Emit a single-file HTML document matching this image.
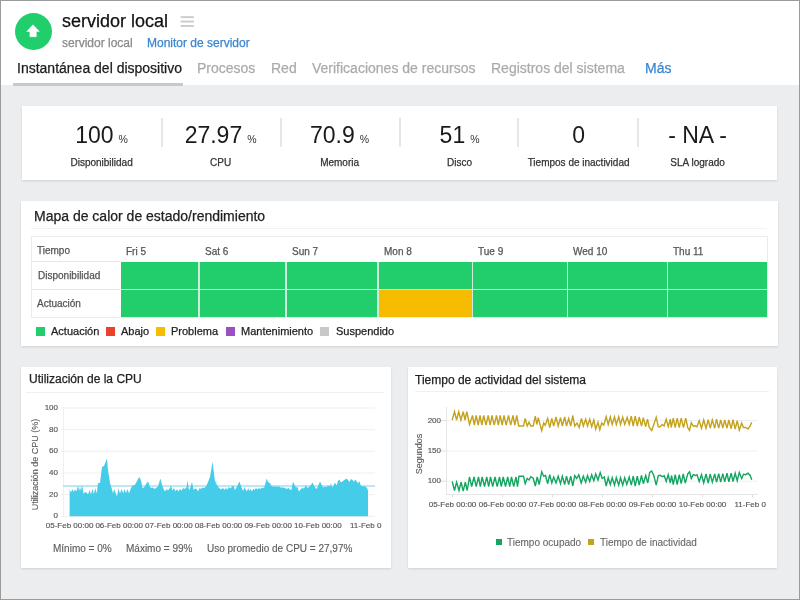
<!DOCTYPE html>
<html><head><meta charset="utf-8">
<style>
*{box-sizing:border-box;margin:0;padding:0}
html,body{width:800px;height:600px;overflow:hidden;background:#fff}
body{font-family:"Liberation Sans",sans-serif;position:relative;color:#222}
.a{position:absolute;white-space:nowrap;will-change:transform;-webkit-text-stroke:0.25px currentColor}
#frame{position:absolute;left:0;top:0;width:800px;height:600px;border:1px solid #9b9b9b;pointer-events:none;z-index:10}
#gray{position:absolute;left:0;top:85px;width:800px;height:515px;background:#ecedef}
.card{position:absolute;background:#fff;box-shadow:0 1px 2px rgba(0,0,0,0.12)}
.sn{font-size:23px;line-height:23px;text-align:center;color:#1a1a1a;-webkit-text-stroke:0}
.pc{font-size:10.5px;margin-left:5px;color:#333}
.sl{font-size:10px;line-height:10px;text-align:center;color:#333}
.hl{font-size:10px;line-height:10px;color:#555}
.hd{font-size:10px;line-height:10px;color:#555}
.lg{font-size:11px;line-height:11px;color:#222}
.ct{font-size:12px;line-height:12px;color:#222}
.ax{font-size:8px;fill:#555;stroke:#555;stroke-width:0.15px;font-family:"Liberation Sans",sans-serif}
.yt{font-size:9px;fill:#5a5a5a;stroke:#5a5a5a;stroke-width:0.12px;font-family:"Liberation Sans",sans-serif}
.st{font-size:10px;line-height:10px;color:#5e5e5e;-webkit-text-stroke:0.15px #5e5e5e}
.st2{font-size:10px;line-height:10px;color:#666;-webkit-text-stroke:0.1px #666}
</style></head><body>
<div id="gray"></div>

<!-- header -->
<div class="a" style="left:15px;top:13px;width:37px;height:37px;border-radius:50%;background:#21ce6c"></div>
<svg class="a" style="left:0;top:0" width="60" height="50"><path d="M33 24.8 L39.3 31.4 L36.3 31.4 L36.3 36.7 L29.9 36.7 L29.9 31.4 L26.7 31.4 Z" fill="#fff" stroke="#fff" stroke-width="0.5" stroke-linejoin="round"/></svg>
<div class="a" style="left:62px;top:11px;font-size:18px;color:#111">servidor local</div>
<svg class="a" style="left:0;top:0" width="200" height="40"><rect x="180.6" y="16.2" width="13.2" height="1.9" fill="#cbcbcb"/><rect x="180.6" y="20.6" width="13.2" height="1.9" fill="#cbcbcb"/><rect x="180.6" y="25" width="13.2" height="1.9" fill="#cbcbcb"/></svg>
<div class="a" style="left:62px;top:35.5px;font-size:12px;color:#8a8a8a">servidor local</div>
<div class="a" style="left:147px;top:35.5px;font-size:12px;color:#3b86d0">Monitor de servidor</div>

<!-- tabs -->
<div class="a" style="left:17px;top:60px;font-size:14px;color:#1c1c1c">Instantánea del dispositivo</div>
<div class="a" style="left:197px;top:60px;font-size:14px;color:#ababab">Procesos</div>
<div class="a" style="left:271px;top:60px;font-size:14px;color:#ababab">Red</div>
<div class="a" style="left:312px;top:60px;font-size:14px;color:#ababab">Verificaciones de recursos</div>
<div class="a" style="left:491px;top:60px;font-size:14px;color:#ababab">Registros del sistema</div>
<div class="a" style="left:645px;top:60px;font-size:14px;color:#3b86d0">Más</div>
<div class="a" style="left:13px;top:83px;width:170px;height:3px;background:#c9c9c9"></div>

<!-- stats card -->
<div class="card" style="left:22px;top:106px;width:755px;height:74px"></div>

<div class="a sn" style="left:42.00px;top:123.5px;width:119.17px">100<span class="pc">%</span></div>
<div class="a sl" style="left:42.00px;top:157.5px;width:119.17px">Disponibilidad</div>
<div class="a" style="left:160.5px;top:117.7px;width:1.5px;height:29px;background:#e6e6e6"></div>
<div class="a sn" style="left:161.17px;top:123.5px;width:119.17px">27.97<span class="pc">%</span></div>
<div class="a sl" style="left:161.17px;top:157.5px;width:119.17px">CPU</div>
<div class="a" style="left:280.0px;top:117.7px;width:1.5px;height:29px;background:#e6e6e6"></div>
<div class="a sn" style="left:280.33px;top:123.5px;width:119.17px">70.9<span class="pc">%</span></div>
<div class="a sl" style="left:280.33px;top:157.5px;width:119.17px">Memoria</div>
<div class="a" style="left:399.1px;top:117.7px;width:1.5px;height:29px;background:#e6e6e6"></div>
<div class="a sn" style="left:399.50px;top:123.5px;width:119.17px">51<span class="pc">%</span></div>
<div class="a sl" style="left:399.50px;top:157.5px;width:119.17px">Disco</div>
<div class="a" style="left:517.3px;top:117.7px;width:1.5px;height:29px;background:#e6e6e6"></div>
<div class="a sn" style="left:518.67px;top:123.5px;width:119.17px">0</div>
<div class="a sl" style="left:518.67px;top:157.5px;width:119.17px">Tiempos de inactividad</div>
<div class="a" style="left:637.1px;top:117.7px;width:1.5px;height:29px;background:#e6e6e6"></div>
<div class="a sn" style="left:637.83px;top:123.5px;width:119.17px">- NA -</div>
<div class="a sl" style="left:637.83px;top:157.5px;width:119.17px">SLA logrado</div>

<!-- heatmap card -->
<div class="card" style="left:21px;top:200.5px;width:756.5px;height:145.5px"></div>

<div class="a" style="left:34.2px;top:208.8px;font-size:14px;line-height:14px;color:#222">Mapa de calor de estado/rendimiento</div>
<div class="a" style="left:31px;top:228px;width:736px;height:1px;background:#f2f2f2"></div>
<div class="a" style="left:31px;top:236px;width:737px;height:82px;border:1px solid #ebebeb"></div>
<div class="a" style="left:32px;top:261px;width:89px;height:1px;background:#e8e8e8"></div>
<div class="a" style="left:32px;top:289px;width:89px;height:1px;background:#e8e8e8"></div>
<div class="a hl" style="left:37px;top:246px">Tiempo</div>
<div class="a hl" style="left:37.5px;top:270.5px">Disponibilidad</div>
<div class="a hl" style="left:37px;top:298.5px">Actuación</div>
<div class="a" style="left:121px;top:262px;width:646px;height:55px;background:#d2eadb"></div>
<div class="a hd" style="left:125.5px;top:246.5px">Fri 5</div>
<div class="a" style="left:121px;top:262px;width:77px;height:27px;background:#22cd6b"></div>
<div class="a" style="left:121px;top:290px;width:77px;height:27px;background:#22cd6b"></div>
<div class="a hd" style="left:204.5px;top:246.5px">Sat 6</div>
<div class="a" style="left:200px;top:262px;width:85px;height:27px;background:#22cd6b"></div>
<div class="a" style="left:200px;top:290px;width:85px;height:27px;background:#22cd6b"></div>
<div class="a hd" style="left:291.5px;top:246.5px">Sun 7</div>
<div class="a" style="left:287px;top:262px;width:90px;height:27px;background:#22cd6b"></div>
<div class="a" style="left:287px;top:290px;width:90px;height:27px;background:#22cd6b"></div>
<div class="a hd" style="left:383.5px;top:246.5px">Mon 8</div>
<div class="a" style="left:379px;top:262px;width:93px;height:27px;background:#22cd6b"></div>
<div class="a" style="left:379px;top:290px;width:93px;height:27px;background:#f6bd00"></div>
<div class="a hd" style="left:477.5px;top:246.5px">Tue 9</div>
<div class="a" style="left:473px;top:262px;width:94px;height:27px;background:#22cd6b"></div>
<div class="a" style="left:473px;top:290px;width:94px;height:27px;background:#22cd6b"></div>
<div class="a hd" style="left:572.5px;top:246.5px">Wed 10</div>
<div class="a" style="left:568px;top:262px;width:99px;height:27px;background:#22cd6b"></div>
<div class="a" style="left:568px;top:290px;width:99px;height:27px;background:#22cd6b"></div>
<div class="a hd" style="left:672.5px;top:246.5px">Thu 11</div>
<div class="a" style="left:668px;top:262px;width:99px;height:27px;background:#22cd6b"></div>
<div class="a" style="left:668px;top:290px;width:99px;height:27px;background:#22cd6b"></div>
<div class="a" style="left:36px;top:327px;width:9px;height:9px;background:#22cd6b"></div>
<div class="a lg" style="left:50.5px;top:326px">Actuación</div>
<div class="a" style="left:106px;top:327px;width:9px;height:9px;background:#e8412c"></div>
<div class="a lg" style="left:120.5px;top:326px">Abajo</div>
<div class="a" style="left:156px;top:327px;width:9px;height:9px;background:#f6bd00"></div>
<div class="a lg" style="left:171px;top:326px">Problema</div>
<div class="a" style="left:225.5px;top:327px;width:9px;height:9px;background:#9b4fc0"></div>
<div class="a lg" style="left:240.5px;top:326px">Mantenimiento</div>
<div class="a" style="left:319.5px;top:327px;width:9px;height:9px;background:#c8c8c8"></div>
<div class="a lg" style="left:336px;top:326px">Suspendido</div>

<!-- cpu card -->
<div class="card" style="left:21px;top:367px;width:369.5px;height:201px"></div>

<!-- uptime card -->
<div class="card" style="left:408px;top:367px;width:369px;height:201px"></div>

<!-- charts -->
<div class="a ct" style="left:29px;top:372.8px">Utilización de la CPU</div>
<div class="a" style="left:26px;top:392px;width:358px;height:1px;background:#f0f0f0"></div>
<svg class="a" style="left:0;top:0" width="800" height="600" viewBox="0 0 800 600">
<line x1="61" y1="516.3" x2="375" y2="516.3" stroke="#efefef" stroke-width="1"/>
<text x="58" y="518.4" text-anchor="end" class="ax">0</text>
<line x1="61" y1="494.6" x2="375" y2="494.6" stroke="#efefef" stroke-width="1"/>
<text x="58" y="496.7" text-anchor="end" class="ax">20</text>
<line x1="61" y1="473.0" x2="375" y2="473.0" stroke="#efefef" stroke-width="1"/>
<text x="58" y="475.1" text-anchor="end" class="ax">40</text>
<line x1="61" y1="451.3" x2="375" y2="451.3" stroke="#efefef" stroke-width="1"/>
<text x="58" y="453.4" text-anchor="end" class="ax">60</text>
<line x1="61" y1="429.7" x2="375" y2="429.7" stroke="#efefef" stroke-width="1"/>
<text x="58" y="431.8" text-anchor="end" class="ax">80</text>
<line x1="61" y1="408.0" x2="375" y2="408.0" stroke="#efefef" stroke-width="1"/>
<text x="58" y="410.1" text-anchor="end" class="ax">100</text>
<line x1="63.5" y1="407" x2="63.5" y2="517" stroke="#efefef" stroke-width="1"/>
<line x1="63" y1="486" x2="375" y2="486" stroke="#a6dff2" stroke-width="1.5"/>
<path d="M69.6,516.3 L69.6,489.0 L71.0,492.4 L72.4,489.0 L73.6,492.0 L75.0,489.6 L76.4,491.6 L78.0,485.6 L79.2,491.0 L80.0,486.4 L81.0,491.0 L82.0,484.4 L83.6,494.0 L85.0,492.0 L86.4,492.4 L88.0,494.4 L89.6,490.0 L91.0,494.4 L92.4,489.0 L94.0,494.0 L95.2,488.0 L96.8,493.6 L98.0,483.0 L100.0,483.0 L102.0,467.0 L104.0,466.0 L105.6,462.0 L107.0,458.4 L108.0,470.0 L110.0,483.0 L111.6,488.0 L113.0,493.6 L114.0,489.0 L115.6,493.0 L117.0,496.4 L118.4,488.4 L120.0,493.6 L121.6,489.0 L123.2,493.6 L124.4,489.0 L126.0,493.0 L127.6,489.0 L129.0,493.6 L131.0,488.0 L133.0,485.0 L134.4,485.6 L136.0,483.0 L138.0,479.0 L139.6,477.0 L141.6,483.0 L142.4,488.0 L144.0,487.6 L145.6,485.0 L147.0,482.4 L148.4,482.0 L149.6,486.0 L151.0,488.0 L153.0,487.6 L154.4,489.0 L156.0,488.0 L158.0,486.4 L160.4,478.4 L162.0,485.0 L163.6,489.0 L165.0,491.6 L166.4,489.0 L168.0,490.4 L169.6,488.4 L171.0,485.6 L172.4,490.4 L174.0,488.0 L175.6,491.6 L177.0,489.0 L178.4,491.6 L180.0,489.0 L181.6,490.4 L183.2,488.0 L185.0,489.0 L186.4,487.6 L187.6,480.4 L189.0,490.4 L190.4,487.6 L192.0,482.0 L193.6,490.0 L195.0,488.4 L196.6,489.0 L198.0,491.6 L199.6,488.0 L201.0,489.0 L202.4,487.6 L204.0,488.0 L206.0,486.4 L208.0,482.0 L210.0,477.0 L211.2,470.0 L212.6,461.6 L214.0,474.0 L215.0,481.0 L218.0,484.0 L215.0,482.0 L217.0,485.0 L219.0,488.0 L221.0,489.6 L223.0,488.0 L224.6,490.0 L226.0,488.0 L227.4,489.6 L229.0,487.0 L230.6,488.4 L232.0,486.4 L233.4,485.6 L235.0,490.0 L237.0,486.4 L239.4,481.4 L241.4,487.0 L243.0,491.0 L244.6,487.6 L246.0,490.0 L247.0,491.6 L248.2,488.0 L249.4,491.0 L250.6,489.0 L252.0,491.6 L253.4,488.4 L254.6,490.0 L256.0,488.0 L257.4,489.6 L259.0,488.0 L260.6,489.0 L262.0,487.6 L264.0,488.0 L265.0,485.0 L266.6,478.4 L268.0,482.0 L270.0,483.0 L271.4,486.0 L273.0,486.4 L275.0,486.4 L277.0,486.4 L279.0,486.4 L280.6,487.6 L283.0,487.6 L285.0,488.0 L286.6,489.0 L288.6,488.0 L290.0,489.6 L291.4,490.0 L293.0,481.6 L294.6,485.0 L296.0,487.6 L297.4,487.0 L299.0,491.6 L300.6,489.6 L302.0,488.0 L304.0,488.4 L306.0,485.0 L307.4,488.0 L309.0,487.0 L311.0,485.0 L312.4,482.4 L314.0,485.6 L315.4,488.0 L316.6,489.0 L318.0,486.0 L320.0,481.6 L322.0,485.6 L323.4,487.6 L325.0,486.4 L326.6,487.0 L328.0,485.6 L330.0,486.4 L331.0,483.0 L332.0,487.6 L333.4,486.0 L335.0,482.4 L336.6,485.6 L338.0,481.0 L339.4,479.6 L341.0,482.4 L343.0,481.0 L345.0,479.6 L346.6,478.4 L348.0,480.0 L349.4,482.0 L351.0,479.0 L352.6,480.0 L354.0,482.0 L355.0,479.6 L357.0,481.6 L358.0,483.6 L359.4,481.0 L360.6,485.0 L362.0,486.4 L364.0,486.0 L366.0,487.0 L367.4,488.4 L368.0,491.0 L368.0,516.3 Z" fill="#44cce9"/>
<text x="69.6" y="528" text-anchor="middle" class="ax">05-Feb 00:00</text>
<text x="119.2" y="528" text-anchor="middle" class="ax">06-Feb 00:00</text>
<text x="168.9" y="528" text-anchor="middle" class="ax">07-Feb 00:00</text>
<text x="218.5" y="528" text-anchor="middle" class="ax">08-Feb 00:00</text>
<text x="268.2" y="528" text-anchor="middle" class="ax">09-Feb 00:00</text>
<text x="317.9" y="528" text-anchor="middle" class="ax">10-Feb 00:00</text>
<text x="350" y="528" class="ax">11-Feb 0</text>
<text transform="translate(38.2,464.5) rotate(-90)" text-anchor="middle" class="yt">Utilización de CPU (%)</text>
<line x1="447" y1="481.2" x2="757.5" y2="481.2" stroke="#efefef" stroke-width="1"/>
<line x1="441" y1="481.2" x2="446" y2="481.2" stroke="#e0e0e0" stroke-width="1"/>
<text x="441" y="483.3" text-anchor="end" class="ax">100</text>
<line x1="447" y1="451" x2="757.5" y2="451" stroke="#efefef" stroke-width="1"/>
<line x1="441" y1="451" x2="446" y2="451" stroke="#e0e0e0" stroke-width="1"/>
<text x="441" y="453.1" text-anchor="end" class="ax">150</text>
<line x1="447" y1="420.5" x2="757.5" y2="420.5" stroke="#efefef" stroke-width="1"/>
<line x1="441" y1="420.5" x2="446" y2="420.5" stroke="#e0e0e0" stroke-width="1"/>
<text x="441" y="422.6" text-anchor="end" class="ax">200</text>
<line x1="446.5" y1="407" x2="446.5" y2="494.5" stroke="#e6e6e6" stroke-width="1"/>
<line x1="446" y1="494.5" x2="757.5" y2="494.5" stroke="#e6e6e6" stroke-width="1"/>
<line x1="452.5" y1="494.5" x2="452.5" y2="497.5" stroke="#e0e0e0" stroke-width="1"/>
<line x1="502.5" y1="494.5" x2="502.5" y2="497.5" stroke="#e0e0e0" stroke-width="1"/>
<line x1="552.5" y1="494.5" x2="552.5" y2="497.5" stroke="#e0e0e0" stroke-width="1"/>
<line x1="602.5" y1="494.5" x2="602.5" y2="497.5" stroke="#e0e0e0" stroke-width="1"/>
<line x1="652.5" y1="494.5" x2="652.5" y2="497.5" stroke="#e0e0e0" stroke-width="1"/>
<line x1="702.5" y1="494.5" x2="702.5" y2="497.5" stroke="#e0e0e0" stroke-width="1"/>
<line x1="752.5" y1="494.5" x2="752.5" y2="497.5" stroke="#e0e0e0" stroke-width="1"/>
<text x="452.5" y="507" text-anchor="middle" class="ax">05-Feb 00:00</text>
<text x="502.5" y="507" text-anchor="middle" class="ax">06-Feb 00:00</text>
<text x="552.5" y="507" text-anchor="middle" class="ax">07-Feb 00:00</text>
<text x="602.5" y="507" text-anchor="middle" class="ax">08-Feb 00:00</text>
<text x="652.5" y="507" text-anchor="middle" class="ax">09-Feb 00:00</text>
<text x="702.5" y="507" text-anchor="middle" class="ax">10-Feb 00:00</text>
<text x="734.5" y="507" class="ax">11-Feb 0</text>
<text transform="translate(422,454) rotate(-90)" text-anchor="middle" class="yt">Segundos</text>
<path d="M452.2,420.0 L454.5,411.7 L456.6,420.0 L458.7,411.7 L460.9,420.0 L463.2,411.7 L465.0,420.0 L466.8,411.7 L469.5,424.5 L472.5,415.5 L474.3,425.2 L476.2,415.5 L478.2,425.2 L480.0,415.5 L481.8,425.2 L483.7,415.5 L486.0,425.2 L488.2,415.5 L490.2,425.2 L492.0,415.5 L494.2,425.2 L496.5,415.5 L498.3,425.2 L500.2,415.5 L502.2,425.2 L504.0,415.5 L506.2,425.2 L508.5,415.5 L510.7,425.2 L513.0,415.5 L514.8,425.2 L516.7,415.5 L518.7,426.0 L523.5,426.0 L525.2,418.5 L527.2,426.0 L529.0,422.2 L530.8,426.0 L533.2,426.0 L535.3,416.2 L536.8,424.5 L538.3,417.7 L540.2,425.2 L541.7,430.5 L543.7,423.0 L545.2,425.2 L547.7,418.5 L549.7,427.5 L551.8,418.5 L553.7,426.0 L556.0,417.0 L558.2,426.0 L560.5,417.7 L562.3,426.0 L564.7,417.0 L566.5,426.0 L568.7,418.5 L570.7,426.0 L572.8,415.5 L574.7,426.0 L577.0,423.0 L579.2,427.5 L581.5,418.5 L583.3,426.0 L585.7,419.2 L587.5,426.0 L589.7,419.2 L591.7,426.7 L593.8,420.0 L595.7,429.0 L598.0,422.2 L599.8,429.7 L601.7,423.0 L603.7,425.2 L606.2,416.7 L608.2,424.5 L610.3,417.0 L612.2,424.5 L614.5,417.0 L616.3,424.5 L618.7,416.7 L620.5,424.5 L622.7,417.3 L624.7,424.5 L627.2,417.3 L629.2,424.5 L631.3,416.2 L633.2,426.0 L635.2,416.2 L637.3,426.0 L639.2,417.0 L641.5,426.0 L643.3,417.7 L645.7,426.7 L647.5,419.2 L649.3,427.5 L651.7,430.5 L653.8,424.5 L656.2,417.3 L658.3,426.7 L660.2,426.7 L662.2,424.5 L664.0,426.0 L666.2,419.2 L668.2,426.7 L670.3,419.2 L671.2,427.5 L673.3,418.2 L675.2,427.5 L677.2,418.2 L679.3,427.5 L681.2,418.2 L683.5,427.5 L685.7,418.2 L687.7,427.5 L689.5,430.5 L691.3,422.7 L693.2,426.0 L695.2,425.7 L697.0,426.7 L699.2,420.7 L701.5,428.2 L703.7,420.0 L706.0,428.2 L708.2,419.7 L710.2,428.2 L712.3,420.0 L714.7,428.2 L716.5,419.2 L718.7,428.2 L720.7,420.0 L722.8,428.2 L724.7,420.0 L727.0,428.2 L728.8,420.0 L731.2,428.7 L733.0,419.7 L735.2,429.0 L737.2,420.7 L739.3,430.2 L741.7,423.0 L743.5,427.5 L745.7,427.5 L748.0,429.0 L750.2,426.0 L751.7,422.2" fill="none" stroke="#c4a21c" stroke-width="1.4" stroke-linejoin="miter"/>
<path d="M452.2,481.5 L454.5,490.5 L456.6,482.2 L459.0,490.5 L461.1,482.2 L463.2,491.2 L465.3,482.2 L467.2,490.5 L469.5,477.0 L471.7,486.7 L474.0,477.0 L476.2,486.7 L478.5,477.0 L480.3,486.7 L482.2,477.0 L484.5,486.7 L486.7,477.0 L488.7,486.7 L490.5,477.0 L492.7,486.7 L495.0,477.0 L497.2,486.7 L499.5,477.0 L501.3,486.7 L503.2,477.0 L505.5,486.7 L507.7,477.0 L509.7,486.7 L511.5,477.0 L513.7,486.7 L516.0,477.0 L517.5,486.7 L519.0,476.2 L523.5,476.2 L525.2,483.7 L527.2,478.5 L529.0,480.0 L530.8,476.7 L533.2,478.2 L535.3,486.0 L537.2,477.0 L539.2,484.5 L541.7,471.7 L543.7,476.2 L545.5,475.5 L547.7,483.7 L549.7,474.7 L551.8,483.0 L553.7,477.0 L556.0,483.0 L558.2,476.2 L560.5,483.7 L562.3,476.2 L564.7,484.5 L566.5,476.2 L568.7,484.5 L570.7,476.2 L572.8,486.0 L574.7,475.5 L576.7,478.5 L578.8,474.7 L581.2,483.0 L583.3,476.2 L585.7,482.2 L587.5,475.5 L589.7,481.5 L591.7,474.7 L593.8,480.7 L595.7,474.0 L598.0,480.0 L600.2,472.5 L602.2,478.5 L604.3,477.0 L606.2,486.0 L608.2,477.7 L610.3,484.5 L612.2,477.7 L614.5,485.2 L616.3,477.7 L618.7,485.2 L620.5,477.7 L622.7,485.2 L624.7,477.7 L626.8,484.5 L629.2,477.0 L631.3,485.2 L633.2,476.2 L635.2,486.0 L637.3,476.2 L639.2,485.2 L641.5,475.5 L643.3,483.7 L645.7,475.5 L647.8,483.0 L649.7,472.5 L651.7,471.0 L653.8,475.5 L656.2,485.2 L658.3,475.5 L660.2,475.2 L662.2,476.7 L664.3,475.8 L666.2,481.5 L668.2,474.7 L670.3,483.0 L671.5,475.5 L673.3,484.5 L675.2,474.7 L677.2,484.5 L679.3,474.7 L681.2,483.7 L683.2,474.0 L685.3,483.0 L687.7,474.0 L689.5,471.7 L691.3,478.5 L693.2,474.7 L695.5,475.5 L697.0,474.7 L699.2,481.5 L701.5,474.7 L703.7,483.0 L706.0,474.0 L708.2,483.0 L710.2,474.0 L712.3,482.2 L714.7,474.0 L716.5,482.2 L718.7,473.7 L720.7,482.2 L722.8,473.7 L724.7,481.8 L727.0,473.2 L728.8,481.8 L731.2,473.2 L733.0,481.5 L735.2,473.2 L737.2,480.7 L739.3,472.5 L741.7,478.5 L743.5,474.3 L745.7,474.7 L748.0,473.2 L750.2,475.5 L751.7,479.7" fill="none" stroke="#14a562" stroke-width="1.4" stroke-linejoin="miter"/>
</svg>
<div class="a st" style="left:53px;top:543.5px">Mínimo = 0%</div>
<div class="a st" style="left:125.75px;top:543.5px">Máximo = 99%</div>
<div class="a st" style="left:206.6px;top:543.5px">Uso promedio de CPU = 27,97%</div>
<div class="a ct" style="left:414.8px;top:374.1px">Tiempo de actividad del sistema</div>
<div class="a" style="left:415px;top:391px;width:354px;height:1px;background:#f0f0f0"></div>
<div class="a" style="left:496px;top:539px;width:6px;height:6px;background:#14a562"></div>
<div class="a st2" style="left:506.5px;top:537.5px">Tiempo ocupado</div>
<div class="a" style="left:588px;top:539px;width:6px;height:6px;background:#c4a21c"></div>
<div class="a st2" style="left:600.4px;top:537.5px">Tiempo de inactividad</div>
<!-- /charts -->
<div id="frame"></div>
</body></html>
